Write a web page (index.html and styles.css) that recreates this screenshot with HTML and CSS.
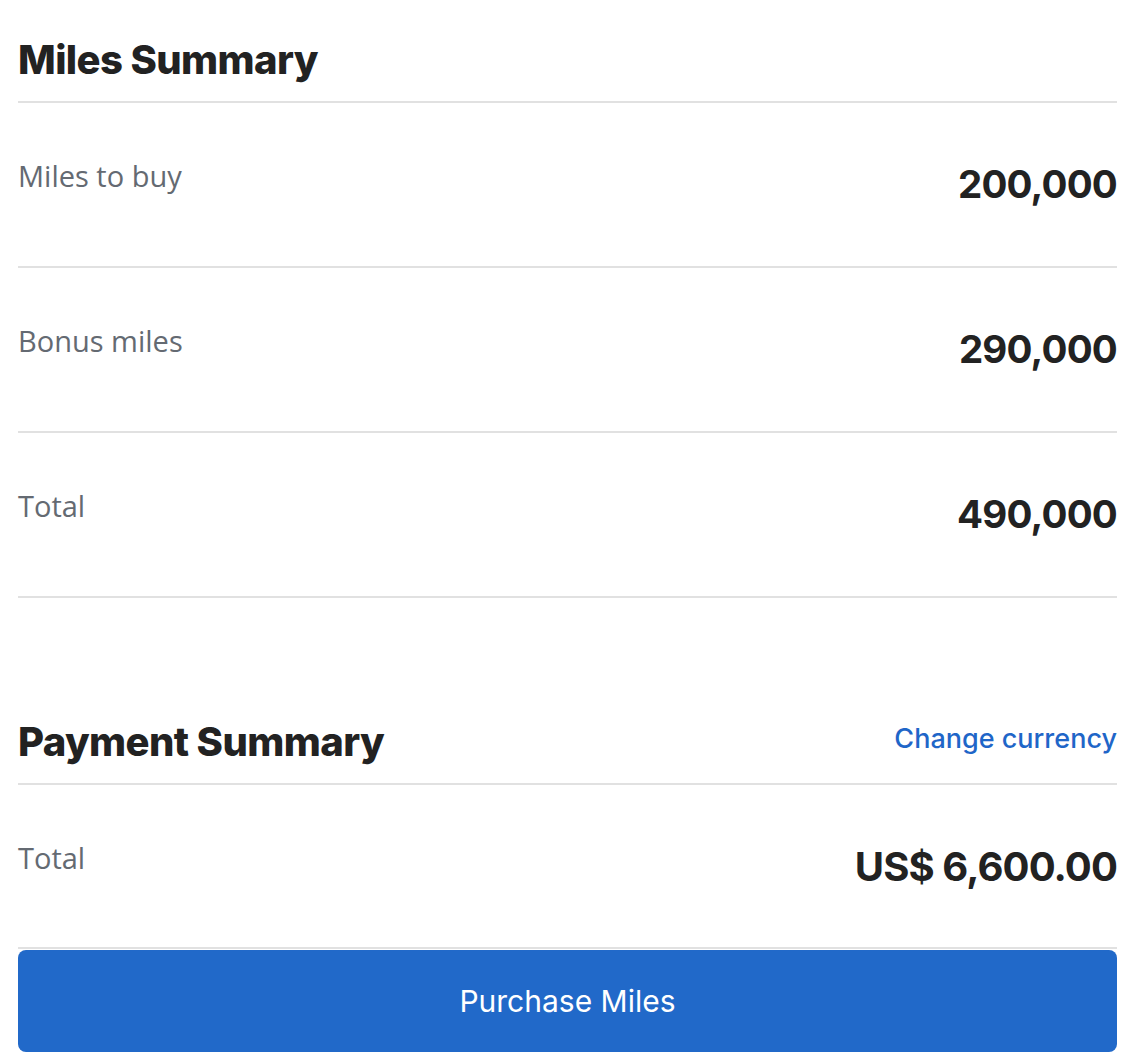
FILE: index.html
```html
<!DOCTYPE html>
<html lang="en">
<head>
  <meta charset="UTF-8">
  <meta name="viewport" content="width=device-width, initial-scale=1.0">
  <title>Buy Miles - Summary</title>
  <link rel="stylesheet" href="styles.css">
</head>
<body>

  <div class="summary">
    <div class="section-head">
      <h2 class="section-title">Miles Summary</h2>
    </div>
    <div class="row">
      <span class="row-label">Miles to buy</span>
      <span class="row-value">200,000</span>
    </div>
    <div class="row">
      <span class="row-label">Bonus miles</span>
      <span class="row-value">290,000</span>
    </div>
    <div class="row">
      <span class="row-label">Total</span>
      <span class="row-value">490,000</span>
    </div>

    <div class="section-head payment-head">
      <h2 class="section-title">Payment Summary</h2>
      <a class="change-link" href="#">Change currency</a>
    </div>
    <div class="row row-total">
      <span class="row-label">Total</span>
      <span class="row-value price">US$ 6,600.00</span>
    </div>

    <button class="purchase-btn" type="button">Purchase Miles</button>
  </div>

</body>
</html>
```

FILE: styles.css
```css
body {
  margin: 0;
  background: #fff;
  color: #222;
  font-family: Inter, "Open Sans", sans-serif;
}
.summary {
  margin: 0 13px 0 18px;
  padding-top: 36px;
}
.section-head {
  display: flex;
  justify-content: space-between;
  align-items: flex-start;
  padding-bottom: 17px;
  border-bottom: 2px solid #e1e1e1;
}
.section-title {
  margin: 0;
  font-size: 40px;
  line-height: 1.2;
  font-weight: 800;
  letter-spacing: -0.6px;
  color: #222;
}
.payment-head {
  margin-top: 120px;
}
.change-link {
  margin-top: 5px;
  font-size: 27px;
  line-height: 1.2;
  font-weight: 500;
  color: #1f66c8;
  text-decoration: none;
}
.row {
  display: flex;
  justify-content: space-between;
  align-items: flex-start;
  box-sizing: border-box;
  height: 165px;
  padding-top: 56px;
  border-bottom: 2px solid #e1e1e1;
}
.row-label {
  font-family: "Open Sans", sans-serif;
  font-size: 29px;
  line-height: 1.2;
  color: #646a72;
}
.row-value {
  margin-top: 2px;
  font-size: 38.5px;
  line-height: 1.2;
  font-weight: 700;
  letter-spacing: -0.8px;
  color: #222;
}
.row-total {
  height: 164px;
}
.price {
  margin-top: 2px;
  font-size: 40px;
  letter-spacing: -0.9px;
}
.purchase-btn {
  display: block;
  width: 100%;
  height: 102px;
  margin-top: 1px;
  border: 0;
  border-radius: 8px;
  background: #2169c9;
  color: #fff;
  font-family: Inter, sans-serif;
  font-size: 30px;
  font-weight: 400;
  cursor: pointer;
}
```
